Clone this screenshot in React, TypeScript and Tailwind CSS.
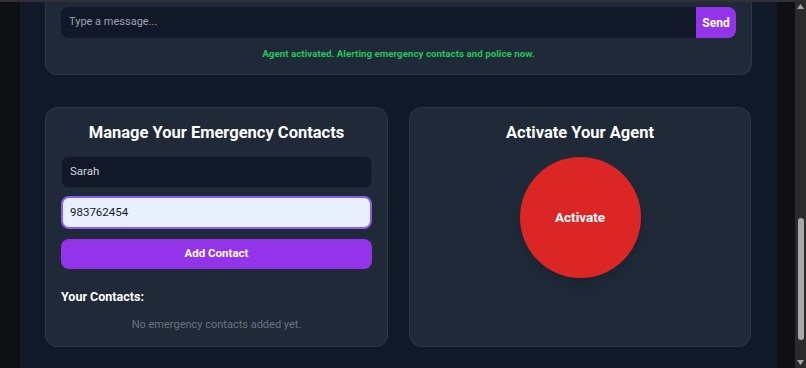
import React from "react";

function Scrollbar() {
  return (
    <div className="w-[11px] h-full bg-[#2b2b2b] flex flex-col items-center">
      <div className="h-[12px] flex items-center justify-center">
        <svg width="7" height="5" viewBox="0 0 7 5"><path d="M0 5 L3.5 0 L7 5 Z" fill="#a3a3a3" /></svg>
      </div>
      <div className="h-[206px]" />
      <div className="w-[6px] h-[122px] rounded-full bg-[#a8a8a8]" />
      <div className="flex-1" />
      <div className="h-[12px] flex items-center justify-center">
        <svg width="7" height="5" viewBox="0 0 7 5"><path d="M0 0 L3.5 5 L7 0 Z" fill="#a3a3a3" /></svg>
      </div>
    </div>
  );
}

export default function App() {
  return (
    <div
      className="w-[806px] h-[368px] overflow-hidden flex bg-[#0e1014] text-white"
      style={{ fontFamily: "Roboto, 'Liberation Sans', sans-serif" }}
    >
      <div className="flex-1 flex flex-col">
        <div className="h-[2px] bg-[#2f3136]" />
        <div className="flex flex-1">
          <div className="w-[20px]" />
          <div className="w-[757px] bg-[#111827] px-[25px] flex flex-col">
            {/* chat card */}
            <div className="bg-[#1f2937] border border-t-0 border-[#2c3646] rounded-b-xl px-[15px] pt-[5px] pb-[12px]">
              <div className="flex h-[31px]">
                <div className="flex-1 bg-[#111827] rounded-l-lg pl-2 flex items-center text-[11px] text-[#9ca3af]">
                  Type a message...
                </div>
                <button className="w-[40px] bg-[#9333ea] rounded-r-lg text-[12px] font-bold text-white">Send</button>
              </div>
              <p className="mt-[8px] text-center text-[9.8px] leading-4 font-bold text-[#22c55e]">
                Agent activated. Alerting emergency contacts and police now.
              </p>
            </div>

            <div className="mt-[32px] grid grid-cols-[343px_342px] gap-[21px]">
              {/* contacts */}
              <div className="bg-[#1f2937] border border-[#2c3646] rounded-xl px-[15px] pt-[11px] pb-[13px]">
                <h2 className="text-center text-[16.5px] leading-7 font-bold">Manage Your Emergency Contacts</h2>
                <div className="mt-[9px] h-[32px] bg-[#111827] border border-[#1c2433] rounded-lg px-2 flex items-center text-[11.5px] text-[#d1d5db]">
                  Sarah
                </div>
                <div className="mt-[8px] h-[33px] bg-[#e8f0fe] border-2 border-[#8b5cf6] rounded-lg px-[7px] flex items-center text-[11.5px] text-[#111827]">
                  983762454
                </div>
                <button className="mt-[10px] w-full h-[30px] bg-[#9333ea] rounded-lg text-[11.5px] font-bold text-white">
                  Add Contact
                </button>
                <h3 className="mt-[18px] text-[12.5px] leading-5 font-bold">Your Contacts:</h3>
                <p className="mt-[10px] text-center text-[11px] leading-4 text-[#6b7280]">No emergency contacts added yet.</p>
              </div>

              {/* activate */}
              <div className="bg-[#1f2937] border border-[#2c3646] rounded-xl pt-[11px] flex flex-col items-center">
                <h2 className="text-center text-[16.5px] leading-7 font-bold">Activate Your Agent</h2>
                <button className="mt-[10px] w-[121px] h-[121px] rounded-full bg-[#dc2626] shadow-lg text-[13.5px] font-bold text-white">
                  Activate
                </button>
              </div>
            </div>
          </div>
          <div className="flex-1" />
        </div>
      </div>
      <Scrollbar />
    </div>
  );
}
